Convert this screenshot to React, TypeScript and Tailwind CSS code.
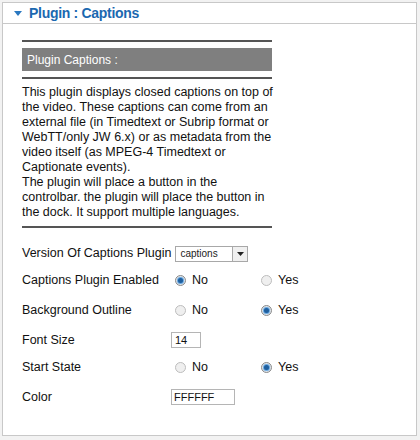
import React from 'react'

const font = { fontFamily: '"Liberation Sans", Arial, sans-serif' }

function Radio({ checked, label }: { checked?: boolean; label: string }) {
  return (
    <span className="flex items-center gap-[6px]">
      <span
        className={`w-[11px] h-[11px] rounded-full border flex items-center justify-center ${
          checked ? 'border-[#8a8a8a] bg-[#e9e9e9]' : 'border-[#bdbdbd] bg-[#efefef]'
        }`}
      >
        {checked && <span className="w-[5px] h-[5px] rounded-full bg-[#1f5f9e] shadow-[0_0_1px_1px_#5aa0e0]" />}
      </span>
      <span>{label}</span>
    </span>
  )
}

function Row({ label, children, h }: { label: string; children: React.ReactNode; h: string }) {
  return (
    <div className={`flex items-center ${h}`}>
      <span className="w-[153px] shrink-0">{label}</span>
      {children}
    </div>
  )
}

export default function App() {
  return (
    <div className="w-[420px] h-[440px] bg-[#f2f2f2] pt-[2px] pl-[2px] overflow-hidden" style={font}>
      <div className="w-[415px] h-[434px] border border-[#c8c8c8] bg-white">
        <div className="h-[21px] border-b border-[#c8c8c8] flex items-center pl-[11px] gap-[7px]">
          <svg width="8" height="5" viewBox="0 0 8 5">
            <path d="M0 0 H8 L4 5 Z" fill="#2a78c0" />
          </svg>
          <span className="text-[14px] font-bold text-[#1b68b0] leading-none tracking-[-0.3px]">Plugin : Captions</span>
        </div>

        <div className="pl-[19px] pt-[16px] text-[12.5px] text-[#111]">
          <div className="w-[252px]">
            <div className="h-[2px] bg-[#555] w-[250px]" />
            <div className="mt-[6px] h-[23px] w-[250px] bg-[#7f7f7f] text-white text-[12px] flex items-center pl-[5px]">
              Plugin Captions :
            </div>
            <div className="mt-[6px] h-[2px] bg-[#555] w-[250px]" />
            <p className="mt-[6px] text-[12.5px] leading-[15px]">
              This plugin displays closed captions on top of the video. These captions can come from an external file (in
              Timedtext or Subrip format or WebTT/only JW 6.x) or as metadata from the video itself (as MPEG-4 Timedtext or
              Captionate events).
              <br />
              The plugin will place a button in the controlbar. the plugin will place the button in the dock. It support
              multiple languages.
            </p>
            <div className="mt-[6px] h-[2px] bg-[#555] w-[250px]" />
          </div>

          <div className="mt-[17px]">
            <div className="flex items-center h-[17px]">
              <span className="mr-[4px]">Version Of Captions Plugin</span>
              <span className="w-[73px] h-[16px] border border-[#a8a8a8] flex items-center justify-between">
                <span className="text-[10px] pl-[4px] text-[#222]">captions</span>
                <span className="w-[15px] h-[14px] border-l border-[#a8a8a8] bg-[#f0f0f0] flex items-center justify-center">
                  <svg width="7" height="4" viewBox="0 0 7 4">
                    <path d="M0 0 H7 L3.5 4 Z" fill="#222" />
                  </svg>
                </span>
              </span>
            </div>
            <Row label="Captions Plugin Enabled" h="h-[26px] mt-[5px]">
              <span className="w-[86px]">
                <Radio checked label="No" />
              </span>
              <Radio label="Yes" />
            </Row>
            <Row label="Background Outline" h="h-[30px] mt-[2px]">
              <span className="w-[86px]">
                <Radio label="No" />
              </span>
              <Radio checked label="Yes" />
            </Row>
            <Row label="Font Size" h="h-[30px]">
              <span className="ml-[-4px] w-[30px] h-[16px] border border-[#b5b5b5] text-[11px] pl-[3px] flex items-center">
                14
              </span>
            </Row>
            <Row label="Start State" h="h-[24px]">
              <span className="w-[86px]">
                <Radio label="No" />
              </span>
              <Radio checked label="Yes" />
            </Row>
            <Row label="Color" h="h-[32px] mt-[2px]">
              <span className="ml-[-4px] w-[64px] h-[16px] border border-[#b5b5b5] text-[11px] pl-[2px] flex items-center">
                FFFFFF
              </span>
            </Row>
          </div>
        </div>
      </div>
    </div>
  )
}
